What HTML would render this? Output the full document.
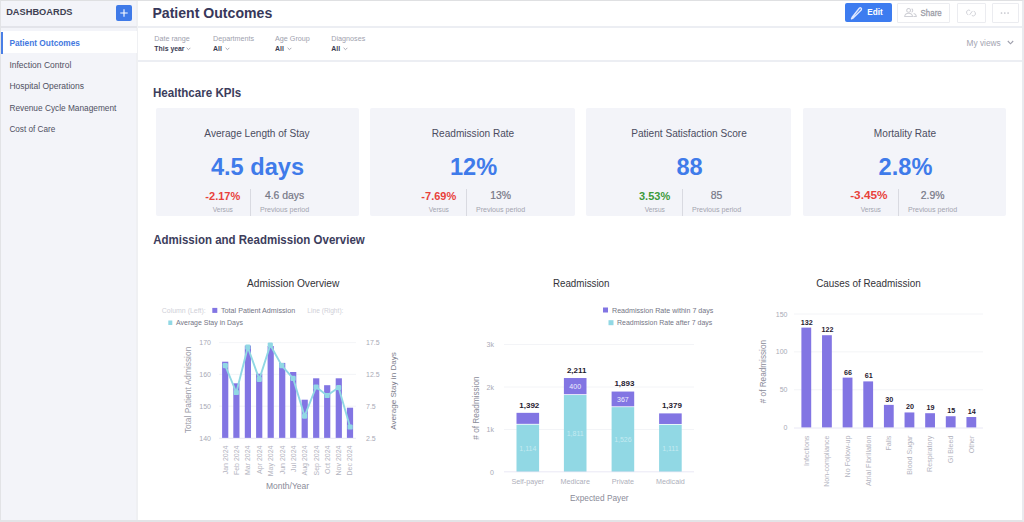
<!DOCTYPE html>
<html><head><meta charset="utf-8"><title>Patient Outcomes</title>
<style>
*{margin:0;padding:0;box-sizing:border-box}
html,body{width:1024px;height:522px;overflow:hidden;background:#fff;font-family:"Liberation Sans",sans-serif}
.t{position:absolute;white-space:nowrap;line-height:1}
.b{position:absolute}
</style></head>
<body>
<div class="b" style="left:0px;top:0px;width:138px;height:522px;background:#f3f4f9;"></div>
<div class="b" style="left:136px;top:0px;width:2px;height:522px;background:#eff0f3;"></div>
<div class="b" style="left:0px;top:26px;width:137px;height:1.5px;background:#e3e4ea;"></div>
<div class="t" style="left:6.20px;top:7.97px;font-size:9.25px;color:#3e3f52;font-weight:bold;transform-origin:0 7.83px;transform:scaleY(1.06);">DASHBOARDS</div>
<div class="b" style="left:116px;top:5px;width:16px;height:16px;background:#3f7ae8;border-radius:2px;"></div>
<svg class="b" style="left:116px;top:5px" width="16" height="16"><path d="M8 4.3V11.7M4.3 8H11.7" stroke="#fff" stroke-width="1.1"/></svg>
<div class="b" style="left:0px;top:31px;width:137px;height:22px;background:#fff;"></div>
<div class="b" style="left:1px;top:32px;width:2px;height:22px;background:#4a7fe6;"></div>
<div class="t" style="left:9.40px;top:38.97px;font-size:8.3px;color:#4378e0;font-weight:bold;">Patient Outcomes</div>
<div class="t" style="left:9.40px;top:60.50px;font-size:8.5px;color:#4f5062;">Infection Control</div>
<div class="t" style="left:9.40px;top:82.00px;font-size:8.5px;color:#4f5062;">Hospital Operations</div>
<div class="t" style="left:9.40px;top:103.57px;font-size:8.3px;color:#4f5062;">Revenue Cycle Management</div>
<div class="t" style="left:9.40px;top:125.76px;font-size:8.2px;color:#4f5062;">Cost of Care</div>
<div class="b" style="left:138px;top:26px;width:886px;height:2px;background:#eceef3;"></div>
<div class="t" style="left:152.40px;top:6.06px;font-size:14.1px;color:#37385a;font-weight:bold;">Patient Outcomes</div>
<div class="b" style="left:845px;top:3px;width:47px;height:19px;background:#3d7cf0;border-radius:2px;"></div>
<svg class="b" style="left:849px;top:6px" width="15" height="14"><path d="M3.2 11.2 L2.5 12.8 L4.1 12.1 L12.2 4 Q12.9 2.9 12 2.1 Q11.2 1.4 10.3 2.2 Z" fill="none" stroke="#dfe8ff" stroke-width="1.4" stroke-linejoin="round"/></svg>
<div class="t" style="left:867.20px;top:9.26px;font-size:8.2px;color:#ffffff;font-weight:bold;transform-origin:0 6.94px;transform:scaleY(1.08);">Edit</div>
<div class="b" style="left:897px;top:3px;width:53px;height:20px;border:1px solid #ebecf0;border-radius:1px;background:#fff;"></div>
<svg class="b" style="left:904px;top:8px" width="13" height="9"><g fill="none" stroke="#cfd0d6" stroke-width="1.05"><circle cx="4.6" cy="2.4" r="1.9"/><path d="M0.7 8.5 Q0.9 5.2 4.6 5.2 Q8.3 5.2 8.5 8.5 Z"/><path d="M7.6 0.7 A1.9 1.9 0 0 1 7.6 4.2 M9.6 5.4 Q12.2 5.8 12.3 8.5 H9.4"/></g></svg>
<div class="t" style="left:920.60px;top:9.51px;font-size:7.9px;color:#9a9ba6;-webkit-text-stroke:0.25px #9a9ba6;transform-origin:0 6.69px;transform:scaleY(1.15);">Share</div>
<div class="b" style="left:957px;top:3px;width:29px;height:20px;border:1px solid #ebecf0;border-radius:1px;background:#fff;"></div>
<svg class="b" style="left:965px;top:9px" width="12" height="8"><g fill="none" stroke="#d2d3d9" stroke-width="1"><path d="M5.2 1.6 Q3.8 0.4 2.4 1.5 Q0.8 2.9 1.9 4.6 L3.3 6.1"/><path d="M6.8 6.4 Q8.2 7.6 9.6 6.5 Q11.2 5.1 10.1 3.4 L8.7 1.9"/><path d="M4.6 5.9 L7.4 2.1"/></g></svg>
<div class="b" style="left:992px;top:3px;width:27px;height:20px;border:1px solid #ebecf0;border-radius:1px;background:#fff;"></div>
<svg class="b" style="left:1000px;top:11px" width="10" height="4"><g fill="#c1c2ca"><circle cx="1.5" cy="2" r="0.85"/><circle cx="4.8" cy="2" r="0.85"/><circle cx="8.1" cy="2" r="0.85"/></g></svg>
<div class="b" style="left:138px;top:60px;width:886px;height:2px;background:#eceef3;"></div>
<div class="t" style="left:154.30px;top:35.41px;font-size:7.2px;color:#a0a1ae;">Date range</div>
<div class="t" style="left:154.30px;top:45.96px;font-size:6.9px;color:#3a3b52;font-weight:bold;">This year</div>
<div class="t" style="left:213.00px;top:35.41px;font-size:7.2px;color:#a0a1ae;">Departments</div>
<div class="t" style="left:213.00px;top:45.96px;font-size:6.9px;color:#3a3b52;font-weight:bold;">All</div>
<div class="t" style="left:275.00px;top:35.41px;font-size:7.2px;color:#a0a1ae;">Age Group</div>
<div class="t" style="left:275.00px;top:45.96px;font-size:6.9px;color:#3a3b52;font-weight:bold;">All</div>
<div class="t" style="left:331.30px;top:35.41px;font-size:7.2px;color:#a0a1ae;">Diagnoses</div>
<div class="t" style="left:331.30px;top:45.96px;font-size:6.9px;color:#3a3b52;font-weight:bold;">All</div>
<svg class="b" style="left:186.3px;top:47px" width="5" height="4"><path d="M0.6 0.8 L2.5 2.7 L4.4 0.8" fill="none" stroke="#9fa0ad" stroke-width="0.9"/></svg>
<svg class="b" style="left:225.1px;top:47px" width="5" height="4"><path d="M0.6 0.8 L2.5 2.7 L4.4 0.8" fill="none" stroke="#9fa0ad" stroke-width="0.9"/></svg>
<svg class="b" style="left:286.8px;top:47px" width="5" height="4"><path d="M0.6 0.8 L2.5 2.7 L4.4 0.8" fill="none" stroke="#9fa0ad" stroke-width="0.9"/></svg>
<svg class="b" style="left:343.0px;top:47px" width="5" height="4"><path d="M0.6 0.8 L2.5 2.7 L4.4 0.8" fill="none" stroke="#9fa0ad" stroke-width="0.9"/></svg>
<div class="t" style="left:966.60px;top:39.27px;font-size:8.3px;color:#a3a4b1;">My views</div>
<svg class="b" style="left:1007px;top:40px" width="7" height="5"><path d="M0.8 1 L3.5 3.8 L6.2 1" fill="none" stroke="#9d9eab" stroke-width="1.1"/></svg>
<div class="t" style="left:152.90px;top:86.58px;font-size:11.6px;color:#3c3d5c;font-weight:bold;transform-origin:0 9.82px;transform:scaleY(1.1);">Healthcare KPIs</div>
<div class="b" style="left:156px;top:107.5px;width:203px;height:108px;background:#f3f4f9;border-radius:2px;"></div>
<div class="t" style="left:257.00px;top:128.95px;font-size:10.1px;color:#4b4c60;transform-origin:0 8.55px;transform:translateX(-50%) scaleY(1.1);">Average Length of Stay</div>
<div class="t" style="left:257.50px;top:155.72px;font-size:23.6px;color:#3f7bea;font-weight:bold;transform:translateX(-50%);">4.5 days</div>
<div class="b" style="left:250px;top:189px;width:1px;height:26.5px;background:#d9dae1;"></div>
<div class="t" style="left:222.80px;top:190.69px;font-size:11px;color:#e8413b;font-weight:bold;transform:translateX(-50%);">-2.17%</div>
<div class="t" style="left:284.60px;top:191.20px;font-size:10.4px;color:#767786;-webkit-text-stroke:0.2px #767786;transform:translateX(-50%);">4.6 days</div>
<div class="t" style="left:222.80px;top:207.01px;font-size:6.6px;color:#a3a4b0;transform:translateX(-50%);">Versus</div>
<div class="t" style="left:284.60px;top:206.59px;font-size:7.1px;color:#a3a4b0;transform:translateX(-50%);">Previous period</div>
<div class="b" style="left:370px;top:107.5px;width:205px;height:108px;background:#f3f4f9;border-radius:2px;"></div>
<div class="t" style="left:473.00px;top:128.95px;font-size:10.1px;color:#4b4c60;transform-origin:0 8.55px;transform:translateX(-50%) scaleY(1.1);">Readmission Rate</div>
<div class="t" style="left:473.50px;top:155.72px;font-size:23.6px;color:#3f7bea;font-weight:bold;transform:translateX(-50%);">12%</div>
<div class="b" style="left:466px;top:189px;width:1px;height:26.5px;background:#d9dae1;"></div>
<div class="t" style="left:438.80px;top:190.69px;font-size:11px;color:#e8413b;font-weight:bold;transform:translateX(-50%);">-7.69%</div>
<div class="t" style="left:500.60px;top:191.20px;font-size:10.4px;color:#767786;-webkit-text-stroke:0.2px #767786;transform:translateX(-50%);">13%</div>
<div class="t" style="left:438.80px;top:207.01px;font-size:6.6px;color:#a3a4b0;transform:translateX(-50%);">Versus</div>
<div class="t" style="left:500.60px;top:206.59px;font-size:7.1px;color:#a3a4b0;transform:translateX(-50%);">Previous period</div>
<div class="b" style="left:586px;top:107.5px;width:205px;height:108px;background:#f3f4f9;border-radius:2px;"></div>
<div class="t" style="left:689.00px;top:128.95px;font-size:10.1px;color:#4b4c60;transform-origin:0 8.55px;transform:translateX(-50%) scaleY(1.1);">Patient Satisfaction Score</div>
<div class="t" style="left:689.50px;top:155.72px;font-size:23.6px;color:#3f7bea;font-weight:bold;transform:translateX(-50%);">88</div>
<div class="b" style="left:682px;top:189px;width:1px;height:26.5px;background:#d9dae1;"></div>
<div class="t" style="left:654.60px;top:190.69px;font-size:11px;color:#3c9a3c;font-weight:bold;transform:translateX(-50%);">3.53%</div>
<div class="t" style="left:716.60px;top:191.20px;font-size:10.4px;color:#767786;-webkit-text-stroke:0.2px #767786;transform:translateX(-50%);">85</div>
<div class="t" style="left:654.80px;top:207.01px;font-size:6.6px;color:#a3a4b0;transform:translateX(-50%);">Versus</div>
<div class="t" style="left:716.60px;top:206.59px;font-size:7.1px;color:#a3a4b0;transform:translateX(-50%);">Previous period</div>
<div class="b" style="left:803px;top:107.5px;width:203px;height:108px;background:#f3f4f9;border-radius:2px;"></div>
<div class="t" style="left:905.00px;top:128.95px;font-size:10.1px;color:#4b4c60;transform-origin:0 8.55px;transform:translateX(-50%) scaleY(1.1);">Mortality Rate</div>
<div class="t" style="left:905.50px;top:155.72px;font-size:23.6px;color:#3f7bea;font-weight:bold;transform:translateX(-50%);">2.8%</div>
<div class="b" style="left:898px;top:189px;width:1px;height:26.5px;background:#d9dae1;"></div>
<div class="t" style="left:868.90px;top:190.01px;font-size:11.8px;color:#e8413b;font-weight:bold;transform:translateX(-50%);">-3.45%</div>
<div class="t" style="left:932.60px;top:191.20px;font-size:10.4px;color:#767786;-webkit-text-stroke:0.2px #767786;transform:translateX(-50%);">2.9%</div>
<div class="t" style="left:870.80px;top:207.01px;font-size:6.6px;color:#a3a4b0;transform:translateX(-50%);">Versus</div>
<div class="t" style="left:932.60px;top:206.59px;font-size:7.1px;color:#a3a4b0;transform:translateX(-50%);">Previous period</div>
<div class="t" style="left:153.20px;top:235.27px;font-size:11.5px;color:#3c3d5c;font-weight:bold;transform-origin:0 9.73px;transform:scaleY(1.16);">Admission and Readmission Overview</div>
<svg class="b" style="left:0;top:0" width="1024" height="522" font-family="Liberation Sans, sans-serif">
<text transform="translate(293.20,287.00) scale(1,1.12)" font-size="10.2" fill="#333338" text-anchor="middle">Admission Overview</text>
<text x="161.80" y="312.60" font-size="6.95" fill="#cfd0d8" text-anchor="start">Column (Left):</text>
<rect x="212.3" y="307.9" width="5" height="5" fill="#8275e3"/>
<text x="221.00" y="312.60" font-size="7.18" fill="#747585" text-anchor="start">Total Patient Admission</text>
<text x="307.30" y="312.60" font-size="6.65" fill="#cfd0d8" text-anchor="start">Line (Right):</text>
<rect x="168.3" y="320.5" width="4" height="4.5" fill="#91d8e4"/>
<text x="176.00" y="325.00" font-size="6.98" fill="#747585" text-anchor="start">Average Stay in Days</text>
<line x1="219" x2="356" y1="406.20" y2="406.20" stroke="#f0f1f5" stroke-width="0.8"/>
<line x1="219" x2="356" y1="374.40" y2="374.40" stroke="#f0f1f5" stroke-width="0.8"/>
<line x1="219" x2="356" y1="342.60" y2="342.60" stroke="#f0f1f5" stroke-width="0.8"/>
<text x="211.00" y="440.50" font-size="7" fill="#a9aab6" text-anchor="end">140</text>
<text x="211.00" y="408.70" font-size="7" fill="#a9aab6" text-anchor="end">150</text>
<text x="211.00" y="376.90" font-size="7" fill="#a9aab6" text-anchor="end">160</text>
<text x="211.00" y="345.10" font-size="7" fill="#a9aab6" text-anchor="end">170</text>
<text x="366.00" y="440.50" font-size="7" fill="#a9aab6" text-anchor="start">2.5</text>
<text x="366.00" y="408.70" font-size="7" fill="#a9aab6" text-anchor="start">7.5</text>
<text x="366.00" y="376.90" font-size="7" fill="#a9aab6" text-anchor="start">12.5</text>
<text x="366.00" y="345.10" font-size="7" fill="#a9aab6" text-anchor="start">17.5</text>
<rect x="222.10" y="361.70" width="6.2" height="76.30" fill="#8275e3"/>
<rect x="233.30" y="383.30" width="6.2" height="54.70" fill="#8275e3"/>
<rect x="244.80" y="345.60" width="6.2" height="92.40" fill="#8275e3"/>
<rect x="256.10" y="373.70" width="6.2" height="64.30" fill="#8275e3"/>
<rect x="267.60" y="346.00" width="6.2" height="92.00" fill="#8275e3"/>
<rect x="279.10" y="362.90" width="6.2" height="75.10" fill="#8275e3"/>
<rect x="290.10" y="372.00" width="6.2" height="66.00" fill="#8275e3"/>
<rect x="301.60" y="399.70" width="6.2" height="38.30" fill="#8275e3"/>
<rect x="313.10" y="378.30" width="6.2" height="59.70" fill="#8275e3"/>
<rect x="324.10" y="385.20" width="6.2" height="52.80" fill="#8275e3"/>
<rect x="335.70" y="378.30" width="6.2" height="59.70" fill="#8275e3"/>
<rect x="346.90" y="407.70" width="6.2" height="30.30" fill="#8275e3"/>
<line x1="219" x2="356" y1="438.3" y2="438.3" stroke="#e3e2f3" stroke-width="0.8"/>
<polyline points="225.3,365.6 236.3,392.5 247.8,347.2 259.3,379.4 270.3,345.0 281.8,365.6 293.1,378.3 304.6,416.2 316.1,387.0 327.1,395.5 338.6,387.5 350.1,427.0" fill="none" stroke="#91d8e4" stroke-width="1.9" stroke-linejoin="round"/>
<rect x="222.7" y="363.0" width="5.2" height="5.2" rx="1.2" fill="#91d8e4"/>
<rect x="233.7" y="389.9" width="5.2" height="5.2" rx="1.2" fill="#91d8e4"/>
<rect x="245.2" y="344.6" width="5.2" height="5.2" rx="1.2" fill="#91d8e4"/>
<rect x="256.7" y="376.8" width="5.2" height="5.2" rx="1.2" fill="#91d8e4"/>
<rect x="267.7" y="342.4" width="5.2" height="5.2" rx="1.2" fill="#91d8e4"/>
<rect x="279.2" y="363.0" width="5.2" height="5.2" rx="1.2" fill="#91d8e4"/>
<rect x="290.5" y="375.7" width="5.2" height="5.2" rx="1.2" fill="#91d8e4"/>
<rect x="302.0" y="413.6" width="5.2" height="5.2" rx="1.2" fill="#91d8e4"/>
<rect x="313.5" y="384.4" width="5.2" height="5.2" rx="1.2" fill="#91d8e4"/>
<rect x="324.5" y="392.9" width="5.2" height="5.2" rx="1.2" fill="#91d8e4"/>
<rect x="336.0" y="384.9" width="5.2" height="5.2" rx="1.2" fill="#91d8e4"/>
<rect x="347.5" y="424.4" width="5.2" height="5.2" rx="1.2" fill="#91d8e4"/>
<text transform="translate(227.60,445.50) rotate(-90)" font-size="7" fill="#b3b4c0" text-anchor="end">Jan 2024</text>
<text transform="translate(238.80,445.50) rotate(-90)" font-size="7" fill="#b3b4c0" text-anchor="end">Feb 2024</text>
<text transform="translate(250.30,445.50) rotate(-90)" font-size="7" fill="#b3b4c0" text-anchor="end">Mar 2024</text>
<text transform="translate(261.60,445.50) rotate(-90)" font-size="7" fill="#b3b4c0" text-anchor="end">Apr 2024</text>
<text transform="translate(273.10,445.50) rotate(-90)" font-size="7" fill="#b3b4c0" text-anchor="end">May 2024</text>
<text transform="translate(284.60,445.50) rotate(-90)" font-size="7" fill="#b3b4c0" text-anchor="end">Jun 2024</text>
<text transform="translate(295.60,445.50) rotate(-90)" font-size="7" fill="#b3b4c0" text-anchor="end">Jul 2024</text>
<text transform="translate(307.10,445.50) rotate(-90)" font-size="7" fill="#b3b4c0" text-anchor="end">Aug 2024</text>
<text transform="translate(318.60,445.50) rotate(-90)" font-size="7" fill="#b3b4c0" text-anchor="end">Sep 2024</text>
<text transform="translate(329.60,445.50) rotate(-90)" font-size="7" fill="#b3b4c0" text-anchor="end">Oct 2024</text>
<text transform="translate(341.20,445.50) rotate(-90)" font-size="7" fill="#b3b4c0" text-anchor="end">Nov 2024</text>
<text transform="translate(352.40,445.50) rotate(-90)" font-size="7" fill="#b3b4c0" text-anchor="end">Dec 2024</text>
<text transform="translate(191.00,390.00) rotate(-90)" font-size="8.4" fill="#9a9ba7" text-anchor="middle">Total Patient Admission</text>
<text transform="translate(395.80,391.00) rotate(-90)" font-size="8.1" fill="#7c7d8b" text-anchor="middle">Average Stay in Days</text>
<text x="287.50" y="488.50" font-size="8.5" fill="#8a8b99" text-anchor="middle">Month/Year</text>
<text transform="translate(581.20,286.80) scale(1,1.12)" font-size="9.8" fill="#333338" text-anchor="middle">Readmission</text>
<rect x="603" y="307.5" width="5" height="5" fill="#8275e3"/>
<text x="612.00" y="312.50" font-size="7.13" fill="#747585" text-anchor="start">Readmission Rate within 7 days</text>
<rect x="608.5" y="320.2" width="5" height="5" fill="#91d8e4"/>
<text x="617.00" y="325.20" font-size="6.98" fill="#747585" text-anchor="start">Readmission Rate after 7 days</text>
<line x1="504" x2="694" y1="429.50" y2="429.50" stroke="#f0f1f5" stroke-width="0.8"/>
<line x1="504" x2="694" y1="387.00" y2="387.00" stroke="#f0f1f5" stroke-width="0.8"/>
<line x1="504" x2="694" y1="344.50" y2="344.50" stroke="#f0f1f5" stroke-width="0.8"/>
<text x="494.00" y="474.50" font-size="7" fill="#a9aab6" text-anchor="end">0</text>
<text x="494.00" y="432.00" font-size="7" fill="#a9aab6" text-anchor="end">1k</text>
<text x="494.00" y="389.50" font-size="7" fill="#a9aab6" text-anchor="end">2k</text>
<text x="494.00" y="347.00" font-size="7" fill="#a9aab6" text-anchor="end">3k</text>
<rect x="516.50" y="424.65" width="22.6" height="47.35" fill="#91d8e4"/>
<rect x="516.50" y="412.84" width="22.6" height="11.01" fill="#8275e3"/>
<text x="529.30" y="407.54" font-size="8" fill="#1f2030" text-anchor="middle" font-weight="bold">1,392</text>
<text x="527.80" y="450.83" font-size="7" fill="#c4eaf1" text-anchor="middle">1,114</text>
<text x="527.80" y="483.50" font-size="7.2" fill="#aeafbb" text-anchor="middle">Self-payer</text>
<rect x="563.90" y="395.03" width="22.6" height="76.97" fill="#91d8e4"/>
<rect x="563.90" y="378.03" width="22.6" height="16.20" fill="#8275e3"/>
<text x="576.70" y="372.73" font-size="8" fill="#1f2030" text-anchor="middle" font-weight="bold">2,211</text>
<text x="575.20" y="389.13" font-size="7" fill="#eeeefe" text-anchor="middle">400</text>
<text x="575.20" y="436.02" font-size="7" fill="#c4eaf1" text-anchor="middle">1,811</text>
<text x="575.20" y="483.50" font-size="7.2" fill="#aeafbb" text-anchor="middle">Medicare</text>
<rect x="611.60" y="407.14" width="22.6" height="64.86" fill="#91d8e4"/>
<rect x="611.60" y="391.55" width="22.6" height="14.80" fill="#8275e3"/>
<text x="624.40" y="386.25" font-size="8" fill="#1f2030" text-anchor="middle" font-weight="bold">1,893</text>
<text x="622.90" y="401.95" font-size="7" fill="#eeeefe" text-anchor="middle">367</text>
<text x="622.90" y="442.07" font-size="7" fill="#c4eaf1" text-anchor="middle">1,526</text>
<text x="622.90" y="483.50" font-size="7.2" fill="#aeafbb" text-anchor="middle">Private</text>
<rect x="659.10" y="424.78" width="22.6" height="47.22" fill="#91d8e4"/>
<rect x="659.10" y="413.39" width="22.6" height="10.59" fill="#8275e3"/>
<text x="671.90" y="408.09" font-size="8" fill="#1f2030" text-anchor="middle" font-weight="bold">1,379</text>
<text x="670.40" y="450.89" font-size="7" fill="#c4eaf1" text-anchor="middle">1,111</text>
<text x="670.40" y="483.50" font-size="7.2" fill="#aeafbb" text-anchor="middle">Medicaid</text>
<line x1="504" x2="694" y1="471.8" y2="471.8" stroke="#e3e2f3" stroke-width="0.8"/>
<text transform="translate(479.00,408.00) rotate(-90)" font-size="8.2" fill="#8a8b99" text-anchor="middle"># of Readmission</text>
<text x="599.30" y="501.20" font-size="8.3" fill="#8a8b99" text-anchor="middle">Expected Payer</text>
<text transform="translate(868.40,286.80) scale(1,1.12)" font-size="9.9" fill="#333338" text-anchor="middle">Causes of Readmission</text>
<line x1="794" x2="983" y1="389.73" y2="389.73" stroke="#f0f1f5" stroke-width="0.8"/>
<line x1="794" x2="983" y1="351.87" y2="351.87" stroke="#f0f1f5" stroke-width="0.8"/>
<line x1="794" x2="983" y1="314.00" y2="314.00" stroke="#f0f1f5" stroke-width="0.8"/>
<text x="787.50" y="430.10" font-size="7" fill="#a9aab6" text-anchor="end">0</text>
<text x="787.50" y="392.23" font-size="7" fill="#a9aab6" text-anchor="end">50</text>
<text x="787.50" y="354.37" font-size="7" fill="#a9aab6" text-anchor="end">100</text>
<text x="787.50" y="316.50" font-size="7" fill="#a9aab6" text-anchor="end">150</text>
<rect x="801.40" y="327.63" width="9.8" height="99.97" fill="#8275e3"/>
<text x="806.80" y="324.63" font-size="7.2" fill="#1f2030" text-anchor="middle" font-weight="bold">132</text>
<text transform="translate(808.70,435.60) rotate(-90)" font-size="7.1" fill="#b3b4c0" text-anchor="end">Infections</text>
<rect x="822.03" y="335.21" width="9.8" height="92.39" fill="#8275e3"/>
<text x="827.43" y="332.21" font-size="7.2" fill="#1f2030" text-anchor="middle" font-weight="bold">122</text>
<text transform="translate(829.33,435.60) rotate(-90)" font-size="7.1" fill="#b3b4c0" text-anchor="end">Non-compliance</text>
<rect x="842.66" y="377.62" width="9.8" height="49.98" fill="#8275e3"/>
<text x="848.06" y="374.62" font-size="7.2" fill="#1f2030" text-anchor="middle" font-weight="bold">66</text>
<text transform="translate(849.96,435.60) rotate(-90)" font-size="7.1" fill="#b3b4c0" text-anchor="end">No Follow-up</text>
<rect x="863.29" y="381.40" width="9.8" height="46.20" fill="#8275e3"/>
<text x="868.69" y="378.40" font-size="7.2" fill="#1f2030" text-anchor="middle" font-weight="bold">61</text>
<text transform="translate(870.59,435.60) rotate(-90)" font-size="7.1" fill="#b3b4c0" text-anchor="end">Atrial Fibrillation</text>
<rect x="883.92" y="404.88" width="9.8" height="22.72" fill="#8275e3"/>
<text x="889.32" y="401.88" font-size="7.2" fill="#1f2030" text-anchor="middle" font-weight="bold">30</text>
<text transform="translate(891.22,435.60) rotate(-90)" font-size="7.1" fill="#b3b4c0" text-anchor="end">Falls</text>
<rect x="904.55" y="412.45" width="9.8" height="15.15" fill="#8275e3"/>
<text x="909.95" y="409.45" font-size="7.2" fill="#1f2030" text-anchor="middle" font-weight="bold">20</text>
<text transform="translate(911.85,435.60) rotate(-90)" font-size="7.1" fill="#b3b4c0" text-anchor="end">Blood Sugar</text>
<rect x="925.18" y="413.21" width="9.8" height="14.39" fill="#8275e3"/>
<text x="930.58" y="410.21" font-size="7.2" fill="#1f2030" text-anchor="middle" font-weight="bold">19</text>
<text transform="translate(932.48,435.60) rotate(-90)" font-size="7.1" fill="#b3b4c0" text-anchor="end">Respiratory</text>
<rect x="945.81" y="416.24" width="9.8" height="11.36" fill="#8275e3"/>
<text x="951.21" y="413.24" font-size="7.2" fill="#1f2030" text-anchor="middle" font-weight="bold">15</text>
<text transform="translate(953.11,435.60) rotate(-90)" font-size="7.1" fill="#b3b4c0" text-anchor="end">GI Bleed</text>
<rect x="966.44" y="417.00" width="9.8" height="10.60" fill="#8275e3"/>
<text x="971.84" y="414.00" font-size="7.2" fill="#1f2030" text-anchor="middle" font-weight="bold">14</text>
<text transform="translate(973.74,435.60) rotate(-90)" font-size="7.1" fill="#b3b4c0" text-anchor="end">Other</text>
<line x1="794" x2="983" y1="428" y2="428" stroke="#e3e2f3" stroke-width="0.8"/>
<text transform="translate(766.00,371.60) rotate(-90)" font-size="8.2" fill="#8a8b99" text-anchor="middle"># of Readmission</text>
</svg>
<div class="b" style="left:0;top:0;width:1024px;height:522px;border-top:1px solid #dfe0e2;border-left:1px solid #e2e3e6;border-right:2px solid #e9eaee;border-bottom:2px solid #e3e4e7;"></div>
</body></html>
